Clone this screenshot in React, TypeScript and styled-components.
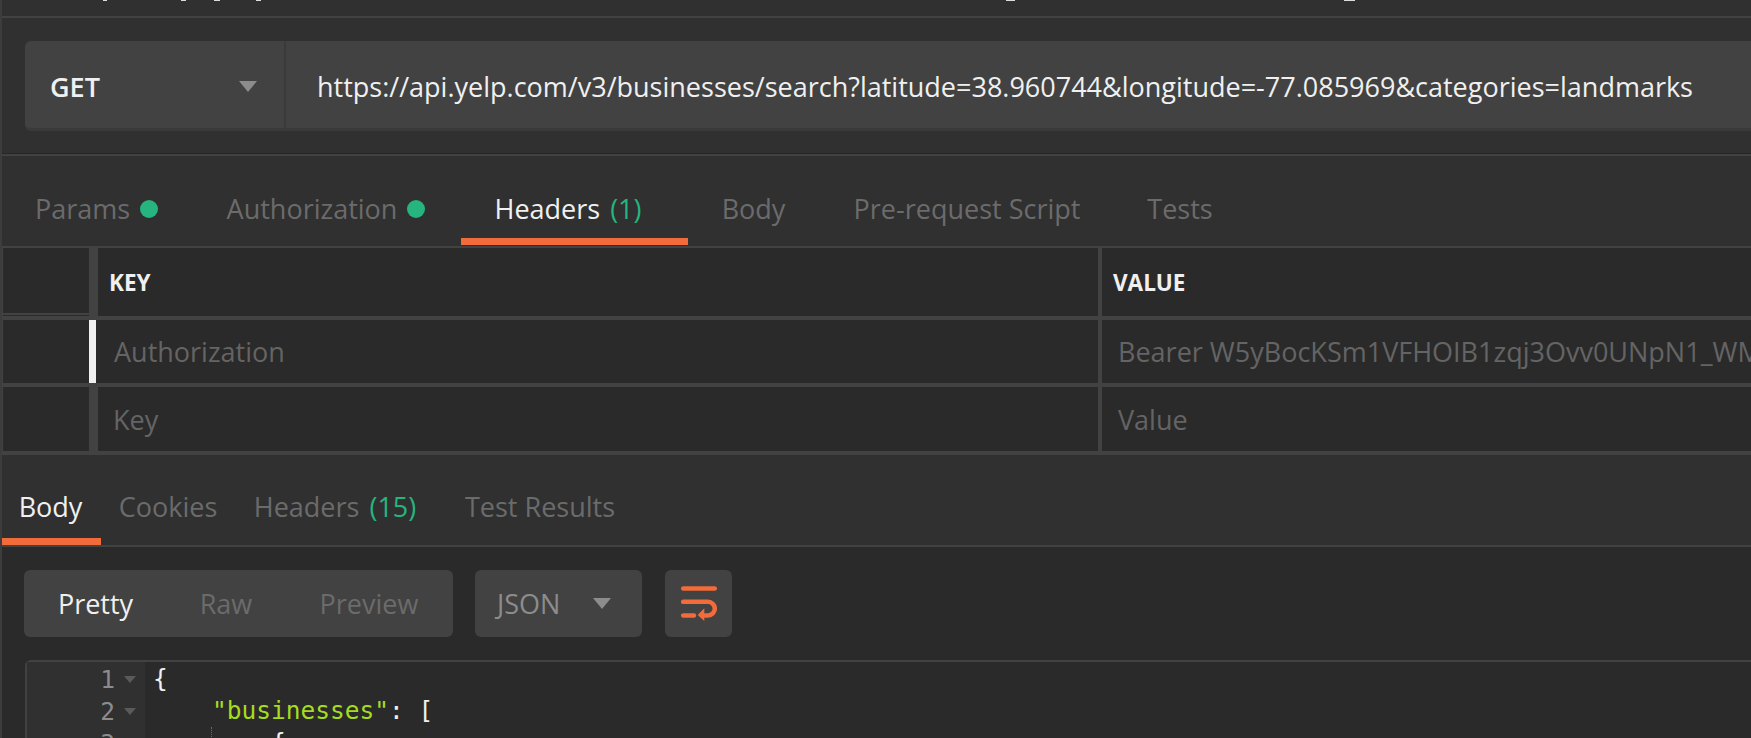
import React from "react";
import styled, { createGlobalStyle } from "styled-components";

const GlobalStyle = createGlobalStyle`
  html, body {
    margin: 0;
    height: 100%;
    background: #303030;
    overflow: hidden;
  }
  body {
    font-family: "Open Sans", "Noto Sans", sans-serif;
  }
`;

const Root = styled.div`
  width: 1751px;
  height: 738px;
  overflow: hidden;
  box-sizing: border-box;
  border-left: 2px solid #3d3d3d;
  background: #303030;
`;

const TopStrip = styled.div`
  display: flex;
  align-items: flex-start;
  height: 16px;
  border-bottom: 2px solid #424242;
`;

const ClippedMark = styled.span<{ $gap: number; $width: number }>`
  height: 1px;
  margin-left: ${(p) => p.$gap}px;
  width: ${(p) => p.$width}px;
  background: #dcdcdc;
`;

const UrlSection = styled.div`
  height: 136px;
  padding: 23px 0 0 23px;
  box-sizing: border-box;
  border-bottom: 1px solid #262626;
`;

const UrlBar = styled.div`
  display: flex;
  height: 90px;
  box-sizing: border-box;
  background: #424242;
  border-bottom: 3px solid #3a3a3a;
  border-radius: 6px 0 0 6px;
`;

const MethodSelect = styled.div`
  width: 261px;
  display: flex;
  align-items: center;
  justify-content: space-between;
  box-sizing: border-box;
  padding: 3px 27px 0 25px;
  border-right: 2px solid #3a3a3a;
  font-size: 27px;
  font-weight: 600;
  color: #f0f0f0;
`;

const Caret = styled.span<{ $small?: boolean }>`
  width: 0;
  height: 0;
  border-left: ${(p) => (p.$small ? 6 : 9)}px solid transparent;
  border-right: ${(p) => (p.$small ? 6 : 9)}px solid transparent;
  border-top: ${(p) => (p.$small ? 7 : 11)}px solid ${(p) => (p.$small ? "#5a5a5a" : "#8c8c8c")};
`;

const UrlText = styled.div`
  display: flex;
  align-items: center;
  padding: 3px 0 0 31px;
  font-size: 27px;
  color: #f0f0f0;
  white-space: nowrap;
`;

const TabBar = styled.div`
  display: flex;
  height: 92px;
  box-sizing: border-box;
  border-bottom: 2px solid #424242;
`;

const RequestTabBar = styled(TabBar)`
  height: 94px;
  border-top: 2px solid #424242;
  padding-bottom: 1px;
`;

const Tab = styled.div<{ $active?: boolean; $width: number; $shift?: number; $top?: number }>`
  width: ${(p) => p.$width}px;
  box-sizing: border-box;
  display: flex;
  align-items: center;
  justify-content: center;
  gap: 10px;
  padding: ${(p) => p.$top ?? 23}px ${(p) => p.$shift ?? 0}px 0 0;
  font-size: 27px;
  white-space: nowrap;
  color: ${(p) => (p.$active ? "#f0f0f0" : "#6b6b6b")};
  border-bottom: 7px solid ${(p) => (p.$active ? "#f26b3a" : "transparent")};
`;

const Count = styled.span`
  color: #26b47f;
`;

const Dot = styled.span`
  width: 18px;
  height: 18px;
  border-radius: 50%;
  background: #26b47f;
`;

const Table = styled.div`
  display: grid;
  grid-template-columns: 86px 9px 1000px 4px 1fr;
  grid-template-rows: 68px 63px 64px;
  row-gap: 4px;
  background: #424242;
  padding: 0 0 4px 1px;
`;

const Cell = styled.div<{ $header?: boolean; $pad?: number }>`
  display: flex;
  align-items: center;
  background: #2a2a2a;
  padding-left: ${(p) => p.$pad ?? 0}px;
  white-space: nowrap;
  overflow: hidden;
  font-size: ${(p) => (p.$header ? 22.5 : 27)}px;
  font-weight: ${(p) => (p.$header ? 700 : 400)};
  color: ${(p) => (p.$header ? "#f0f0f0" : "#646464")};
`;

const CornerCell = styled(Cell)`
  background: linear-gradient(#2a2a2a 65px, #424242 65px, #424242 67px, #2a2a2a 67px);
`;

const Handle = styled.div<{ $active?: boolean }>`
  background: ${(p) =>
    p.$active ? "linear-gradient(90deg, #f0f0f0 7px, #2a2a2a 7px)" : "#424242"};
`;

const Divider = styled.div`
  background: #424242;
`;

const ResponseBody = styled.div`
  background: #2a2a2a;
  height: 200px;
  padding: 23px 0 0 22px;
`;

const Toolbar = styled.div`
  display: flex;
  gap: 22px;
  height: 67px;
`;

const Group = styled.div`
  display: flex;
  align-items: center;
  background: #424242;
  border-radius: 6px;
  font-size: 27px;
  color: #6b6b6b;
`;

const ViewOption = styled.span<{ $active?: boolean; $width: number }>`
  width: ${(p) => p.$width}px;
  text-align: center;
  color: ${(p) => (p.$active ? "#f0f0f0" : "#6b6b6b")};
`;

const FormatSelect = styled(Group)`
  width: 167px;
  box-sizing: border-box;
  padding: 0 31px 0 22px;
  justify-content: space-between;
  color: #8c8c8c;
`;

const WrapButton = styled(Group)`
  width: 67px;
  margin-left: 1px;
  justify-content: center;
`;

const Editor = styled.div`
  display: flex;
  margin: 23px 0 0 1px;
  height: 120px;
  border-top: 2px solid #424242;
  border-left: 2px solid #424242;
  border-top-left-radius: 6px;
`;

const Gutter = styled.div`
  width: 118px;
  flex: none;
  padding-top: 1px;
  background: #303030;
`;

const GutterLine = styled.div`
  display: flex;
  align-items: center;
  justify-content: flex-end;
  gap: 9px;
  height: 32px;
  padding-right: 9px;
  font-family: "DejaVu Sans Mono", monospace;
  font-size: 24.5px;
  color: #8c8c8c;
`;

const Code = styled.div`
  flex: 1;
  padding: 1px 0 0 8px;
  font-family: "DejaVu Sans Mono", monospace;
  font-size: 24.5px;
  color: #f0f0f0;
  white-space: pre;
`;

const CodeLine = styled.div`
  height: 32px;
  line-height: 32px;
`;

const Key = styled.span`
  color: #a6dc1f;
`;

const IndentGuide = styled.span`
  display: inline-block;
  height: 32px;
  margin-left: -1px;
  border-left: 1px dotted #6a6a6a;
  vertical-align: top;
`;

const WrapIcon = () => (
  <svg width="36" height="36" viewBox="0 0 36 36" fill="none" stroke="#f26b3a" strokeWidth="4.5" strokeLinecap="round">
    <path d="M2.2 2.5H33.8" />
    <path d="M2.2 15.8H27a6.8 6.8 0 0 1 0 13.6H21" />
    <path d="M2.2 29.4H13" />
    <path d="M16.7 29 23.3 22.3V35z" fill="#f26b3a" stroke="none" />
  </svg>
);

const clippedMarks = [
  { gap: 101, width: 4 },
  { gap: 74, width: 5 },
  { gap: 28, width: 6 },
  { gap: 36, width: 5 },
  { gap: 745, width: 9 },
  { gap: 329, width: 11 },
];

export default function App() {
  return (
    <Root>
      <GlobalStyle />
      <TopStrip>
        {clippedMarks.map((m, i) => (
          <ClippedMark key={i} $gap={m.gap} $width={m.width} />
        ))}
      </TopStrip>
      <UrlSection>
        <UrlBar>
          <MethodSelect>
            GET
            <Caret />
          </MethodSelect>
          <UrlText>https://api.yelp.com/v3/businesses/search?latitude=38.960744&amp;longitude=-77.085969&amp;categories=landmarks</UrlText>
        </UrlBar>
      </UrlSection>
      <RequestTabBar>
        <Tab $width={192} $shift={3}>Params <Dot /></Tab>
        <Tab $width={267} $shift={3}>Authorization <Dot /></Tab>
        <Tab $width={227} $shift={13} $active>Headers <Count>(1)</Count></Tab>
        <Tab $width={132} $shift={1}>Body</Tab>
        <Tab $width={294}>Pre-request Script</Tab>
        <Tab $width={132}>Tests</Tab>
      </RequestTabBar>
      <Table>
        <CornerCell />
        <Handle />
        <Cell $header $pad={11}>KEY</Cell>
        <Divider />
        <Cell $header $pad={11}>VALUE</Cell>
        <Cell />
        <Handle $active />
        <Cell $pad={16}>Authorization</Cell>
        <Divider />
        <Cell $pad={16}>Bearer W5yBocKSm1VFHOIB1zqj3Ovv0UNpN1_WM</Cell>
        <Cell />
        <Handle />
        <Cell $pad={15}>Key</Cell>
        <Divider />
        <Cell $pad={16}>Value</Cell>
      </Table>
      <TabBar>
        <Tab $width={99} $shift={2} $top={19} $active>Body</Tab>
        <Tab $width={136} $shift={2} $top={19}>Cookies</Tab>
        <Tab $width={198} $shift={2} $top={19}>Headers <Count>(15)</Count></Tab>
        <Tab $width={210} $top={19}>Test Results</Tab>
      </TabBar>
      <ResponseBody>
        <Toolbar>
          <Group>
            <ViewOption $width={143} $active>Pretty</ViewOption>
            <ViewOption $width={118}>Raw</ViewOption>
            <ViewOption $width={168}>Preview</ViewOption>
          </Group>
          <FormatSelect>
            JSON
            <Caret />
          </FormatSelect>
          <WrapButton>
            <WrapIcon />
          </WrapButton>
        </Toolbar>
        <Editor>
          <Gutter>
            <GutterLine>1<Caret $small /></GutterLine>
            <GutterLine>2<Caret $small /></GutterLine>
            <GutterLine>3<Caret $small /></GutterLine>
          </Gutter>
          <Code>
            <CodeLine>{"{"}</CodeLine>
            <CodeLine>{"    "}<Key>"businesses"</Key>: [</CodeLine>
            <CodeLine>{"    "}<IndentGuide />{"    {"}</CodeLine>
          </Code>
        </Editor>
      </ResponseBody>
    </Root>
  );
}
